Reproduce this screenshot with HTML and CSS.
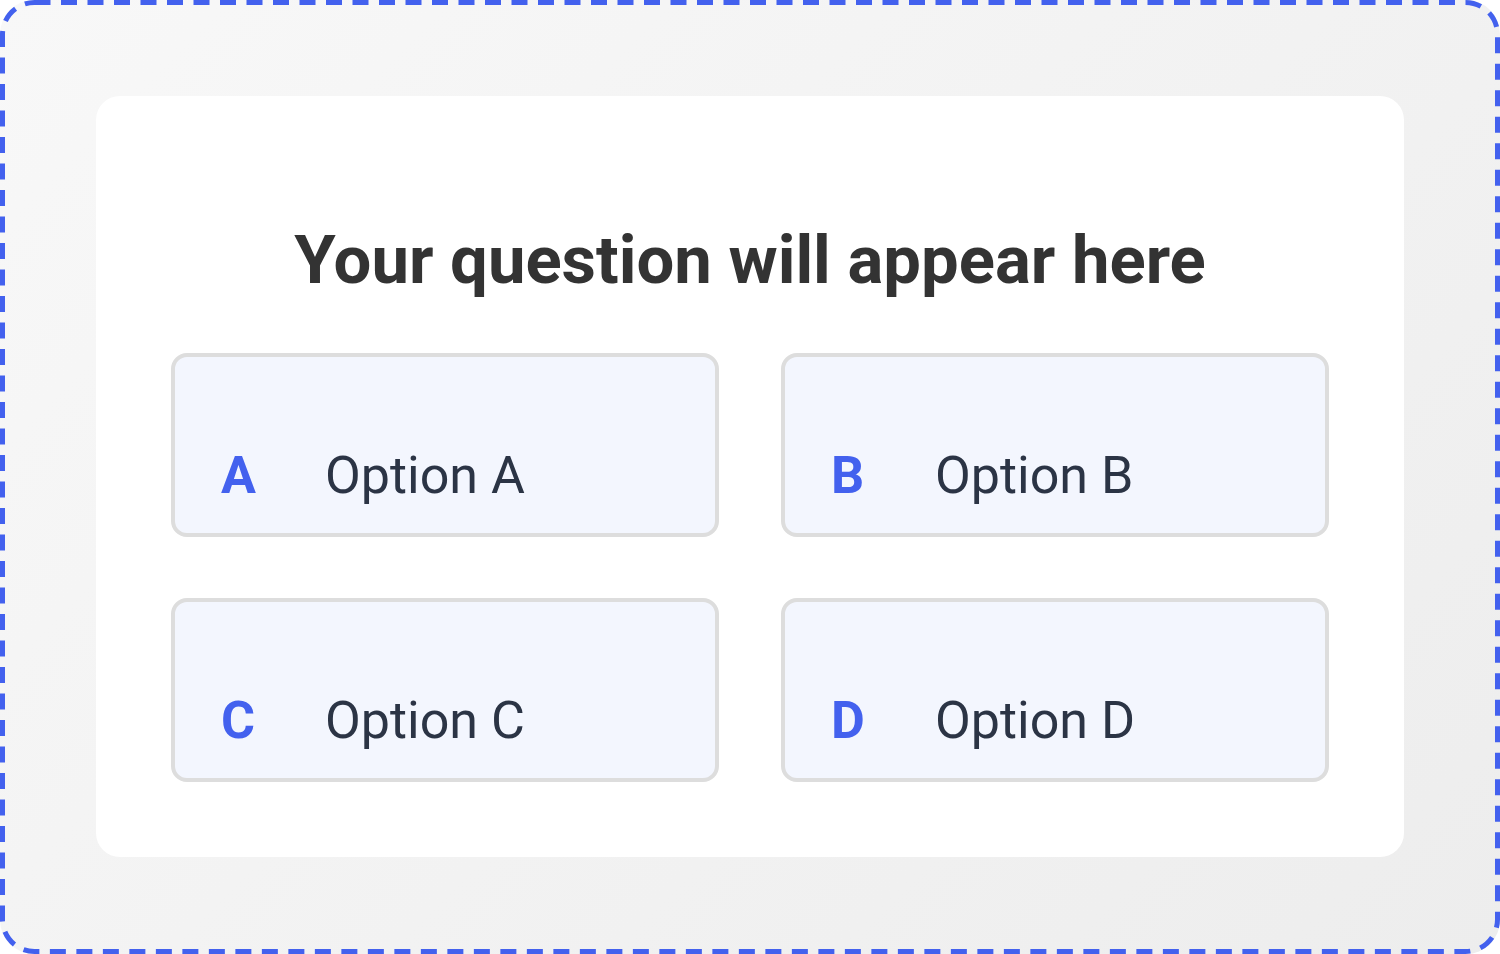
FILE: index.html
```html
<!DOCTYPE html>
<html lang="en">
<head>
<meta charset="utf-8">
<title>Quiz preview</title>
<link rel="stylesheet" href="styles.css">
</head>
<body>
<div class="frame">
  <svg class="frame-border" width="1500" height="954" viewBox="0 0 1500 954" aria-hidden="true">
    <rect x="2.5" y="2.5" width="1495" height="949" rx="32" ry="32" fill="none" stroke="#4361ee" stroke-width="5" stroke-dasharray="16 10.5"/>
  </svg>
  <div class="card">
    <h1 class="question">Your question will appear here</h1>
    <div class="options">
      <div class="option"><span class="letter">A</span><span class="label">Option A</span></div>
      <div class="option"><span class="letter">B</span><span class="label">Option B</span></div>
      <div class="option"><span class="letter">C</span><span class="label">Option C</span></div>
      <div class="option"><span class="letter">D</span><span class="label">Option D</span></div>
    </div>
  </div>
</div>
</body>
</html>
```
FILE: styles.css
```css
html, body {
  margin: 0;
  padding: 0;
  background: #ffffff;
}
body {
  font-family: Roboto, "Liberation Sans", sans-serif;
}
.frame {
  position: relative;
  box-sizing: border-box;
  width: 1500px;
  height: 954px;
  border-radius: 34px;
  background: linear-gradient(135deg, #f8f8f8 0%, #ededed 100%);
  padding: 96px;
}
.frame-border {
  position: absolute;
  left: 0;
  top: 0;
  display: block;
}
.card {
  position: relative;
  box-sizing: border-box;
  height: 761px;
  background: #ffffff;
  border-radius: 24px;
  padding: 126px 75px 75px;
  display: flex;
  flex-direction: column;
}
.question {
  margin: 0 0 54px;
  font-size: 67px;
  font-weight: 700;
  line-height: 77px;
  color: #333333;
  text-align: center;
}
.options {
  display: grid;
  grid-template-columns: 1fr 1fr;
  column-gap: 62px;
  row-gap: 61px;
}
.option {
  box-sizing: border-box;
  height: 184px;
  border: 4px solid #dddddd;
  border-radius: 16px;
  background: #f3f6fe;
  padding: 88px 46px 0;
  display: flex;
  align-items: baseline;
  font-size: 52px;
  line-height: 61px;
}
.letter {
  width: 104px;
  font-weight: 700;
  color: #4361ee;
}
.label {
  color: #2b3445;
}
```
